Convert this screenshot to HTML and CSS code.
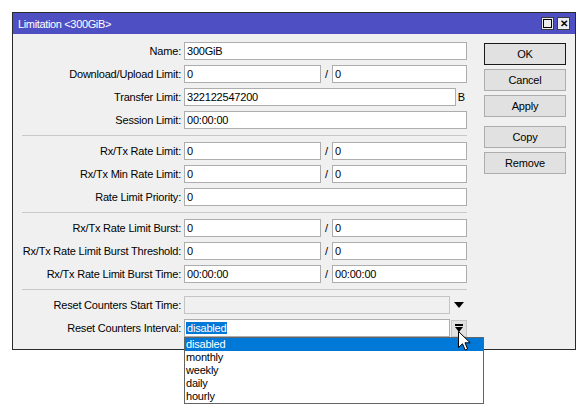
FILE: index.html
```html
<!DOCTYPE html>
<html lang="en">
<head>
  <meta charset="UTF-8" />
  <title>Limitation &lt;300GiB&gt;</title>
  <link rel="stylesheet" href="styles.css">
</head>
<body>
  <div class="window">
    <div class="titlebar">
      <span class="title">Limitation &lt;300GiB&gt;</span>
      <div class="title-buttons">
        <span class="tbtn"><span class="max-icon"></span></span>
        <span class="tbtn close">&#x2715;</span>
      </div>
    </div>

    <div class="content">
      <div class="form">
        <!-- general -->
        <div class="group">
          <div class="row">
            <span class="label">Name:</span>
            <div class="field"><div class="input full">300GiB</div></div>
          </div>
          <div class="row">
            <span class="label">Download/Upload Limit:</span>
            <div class="field"><div class="input half">0</div><span class="slash">/</span><div class="input rest">0</div></div>
          </div>
          <div class="row">
            <span class="label">Transfer Limit:</span>
            <div class="field"><div class="input unitbox">322122547200</div><span class="unit">B</span></div>
          </div>
          <div class="row">
            <span class="label">Session Limit:</span>
            <div class="field"><div class="input full">00:00:00</div></div>
          </div>
        </div>

        <hr class="divider">

        <!-- rate limits -->
        <div class="group">
          <div class="row">
            <span class="label">Rx/Tx Rate Limit:</span>
            <div class="field"><div class="input half">0</div><span class="slash">/</span><div class="input rest">0</div></div>
          </div>
          <div class="row">
            <span class="label">Rx/Tx Min Rate Limit:</span>
            <div class="field"><div class="input half">0</div><span class="slash">/</span><div class="input rest">0</div></div>
          </div>
          <div class="row">
            <span class="label">Rate Limit Priority:</span>
            <div class="field"><div class="input full">0</div></div>
          </div>
        </div>

        <hr class="divider">

        <!-- burst -->
        <div class="group">
          <div class="row">
            <span class="label">Rx/Tx Rate Limit Burst:</span>
            <div class="field"><div class="input half">0</div><span class="slash">/</span><div class="input rest">0</div></div>
          </div>
          <div class="row">
            <span class="label">Rx/Tx Rate Limit Burst Threshold:</span>
            <div class="field"><div class="input half">0</div><span class="slash">/</span><div class="input rest">0</div></div>
          </div>
          <div class="row">
            <span class="label">Rx/Tx Rate Limit Burst Time:</span>
            <div class="field"><div class="input half">00:00:00</div><span class="slash">/</span><div class="input rest">00:00:00</div></div>
          </div>
        </div>

        <hr class="divider">

        <!-- counters -->
        <div class="group">
          <div class="row">
            <span class="label">Reset Counters Start Time:</span>
            <div class="field">
              <div class="input combo disabled"></div>
              <span class="arrow-area"><span class="tri"></span></span>
            </div>
          </div>
          <div class="row">
            <span class="label">Reset Counters Interval:</span>
            <div class="field dropdown-host">
              <div class="input combo"><span class="selected-text">disabled</span></div>
              <span class="drop-btn"><span class="bar"></span><span class="tri small"></span></span>

              <ul class="dropdown">
                <li class="active">disabled</li>
                <li>monthly</li>
                <li>weekly</li>
                <li>daily</li>
                <li>hourly</li>
              </ul>

              <svg class="cursor" width="13" height="20" viewBox="0 0 13 20">
                <path d="M0.5 0.5 L0.5 16.5 L4.5 12.8 L7.2 19 L9.6 18 L7 11.8 L12.2 11.8 Z" fill="#fff" stroke="#000" stroke-width="1" stroke-linejoin="miter"/>
              </svg>
            </div>
          </div>
        </div>
      </div>

      <div class="buttons">
        <button class="btn default">OK</button>
        <button class="btn">Cancel</button>
        <button class="btn">Apply</button>
        <button class="btn spaced">Copy</button>
        <button class="btn">Remove</button>
      </div>
    </div>
  </div>
</body>
</html>
```

FILE: styles.css
```css
body {
  margin: 0;
  min-height: 100vh;
  background: #fff;
  font-family: "Liberation Sans", Arial, sans-serif;
  font-size: 11px;
  color: #000;
}
.window {
  margin: 12px 0 0 12px;
  width: 562px;
  border: 1px solid #2a2a2a;
  background: #f0f0f0;
}
.titlebar {
  height: 21px;
  background: #4f4fc4;
  display: flex;
  align-items: center;
  justify-content: space-between;
  padding: 0 5px 0 5px;
}
.title {
  color: #fff;
  font-size: 11px;
  letter-spacing: -0.35px;
}
.title-buttons {
  display: flex;
  gap: 3px;
}
.tbtn {
  width: 13px;
  height: 13px;
  background: #ececec;
  border: 1px solid #3a3a3a;
  display: flex;
  align-items: center;
  justify-content: center;
  box-sizing: border-box;
}
.max-icon {
  width: 7px;
  height: 7px;
  border: 1px solid #000;
}
.close {
  font-size: 10px;
  font-weight: bold;
  line-height: 1;
}
.content {
  display: flex;
  padding: 8px 8px 12px 0;
}
.form {
  width: 454px;
}
.group {
  display: flex;
  flex-direction: column;
  gap: 5px;
}
.row {
  display: flex;
  align-items: center;
  height: 18px;
}
.label {
  width: 168px;
  text-align: right;
  letter-spacing: -0.2px;
  margin-right: 3px;
  white-space: nowrap;
}
.field {
  width: 283px;
  display: flex;
  align-items: center;
}
.input {
  height: 18px;
  box-sizing: border-box;
  border: 1px solid #adadad;
  background: #fff;
  padding: 0 2px;
  line-height: 16px;
  letter-spacing: -0.2px;
  white-space: nowrap;
  overflow: hidden;
}
.full { width: 283px; }
.half { width: 137px; }
.rest { flex: 1; }
.unitbox { width: 272px; }
.combo { width: 266px; }
.slash, .unit {
  width: 11px;
  text-align: center;
}
.disabled {
  background: #f0f0f0;
  border-color: #c4c4c4;
}
.selected-text {
  background: #0078d7;
  color: #fff;
  padding: 0 1px;
  margin-left: -1px;
}
.divider {
  border: none;
  border-top: 1px solid #c8c8c8;
  margin: 6px 0 6px 9px;
}
.arrow-area {
  width: 17px;
  display: flex;
  justify-content: center;
}
.tri {
  width: 0;
  height: 0;
  border-left: 5px solid transparent;
  border-right: 5px solid transparent;
  border-top: 6px solid #000;
}
.tri.small {
  border-left-width: 4px;
  border-right-width: 4px;
  border-top-width: 5px;
}
.drop-btn {
  margin-left: 1px;
  width: 16px;
  height: 17px;
  box-sizing: border-box;
  background: #e1e1e1;
  border: 1px solid #c4c4c4;
  display: flex;
  flex-direction: column;
  align-items: center;
  justify-content: center;
  gap: 1px;
}
.bar {
  width: 8px;
  height: 2px;
  background: #000;
}
.dropdown-host {
  position: relative;
}
.dropdown {
  position: absolute;
  top: 18px;
  left: 0;
  width: 300px;
  margin: 0;
  padding: 0;
  list-style: none;
  background: #fff;
  border: 1px solid #646464;
  box-sizing: border-box;
  z-index: 2;
}
.dropdown li {
  height: 13px;
  line-height: 13px;
  padding-left: 1px;
  letter-spacing: -0.2px;
}
.dropdown li.active {
  background: #0078d7;
  color: #fff;
}
.cursor {
  position: absolute;
  left: 274px;
  top: 12px;
  z-index: 3;
}
.buttons {
  margin-left: 17px;
  margin-top: 1px;
  width: 82px;
  display: flex;
  flex-direction: column;
  gap: 4px;
}
.btn {
  height: 22px;
  padding: 0;
  background: #e1e1e1;
  border: 1px solid #adadad;
  font-family: inherit;
  font-size: 11px;
  letter-spacing: -0.2px;
  color: #000;
}
.btn.default {
  border-color: #1a1a1a;
}
.btn.spaced {
  margin-top: 5px;
}
```
